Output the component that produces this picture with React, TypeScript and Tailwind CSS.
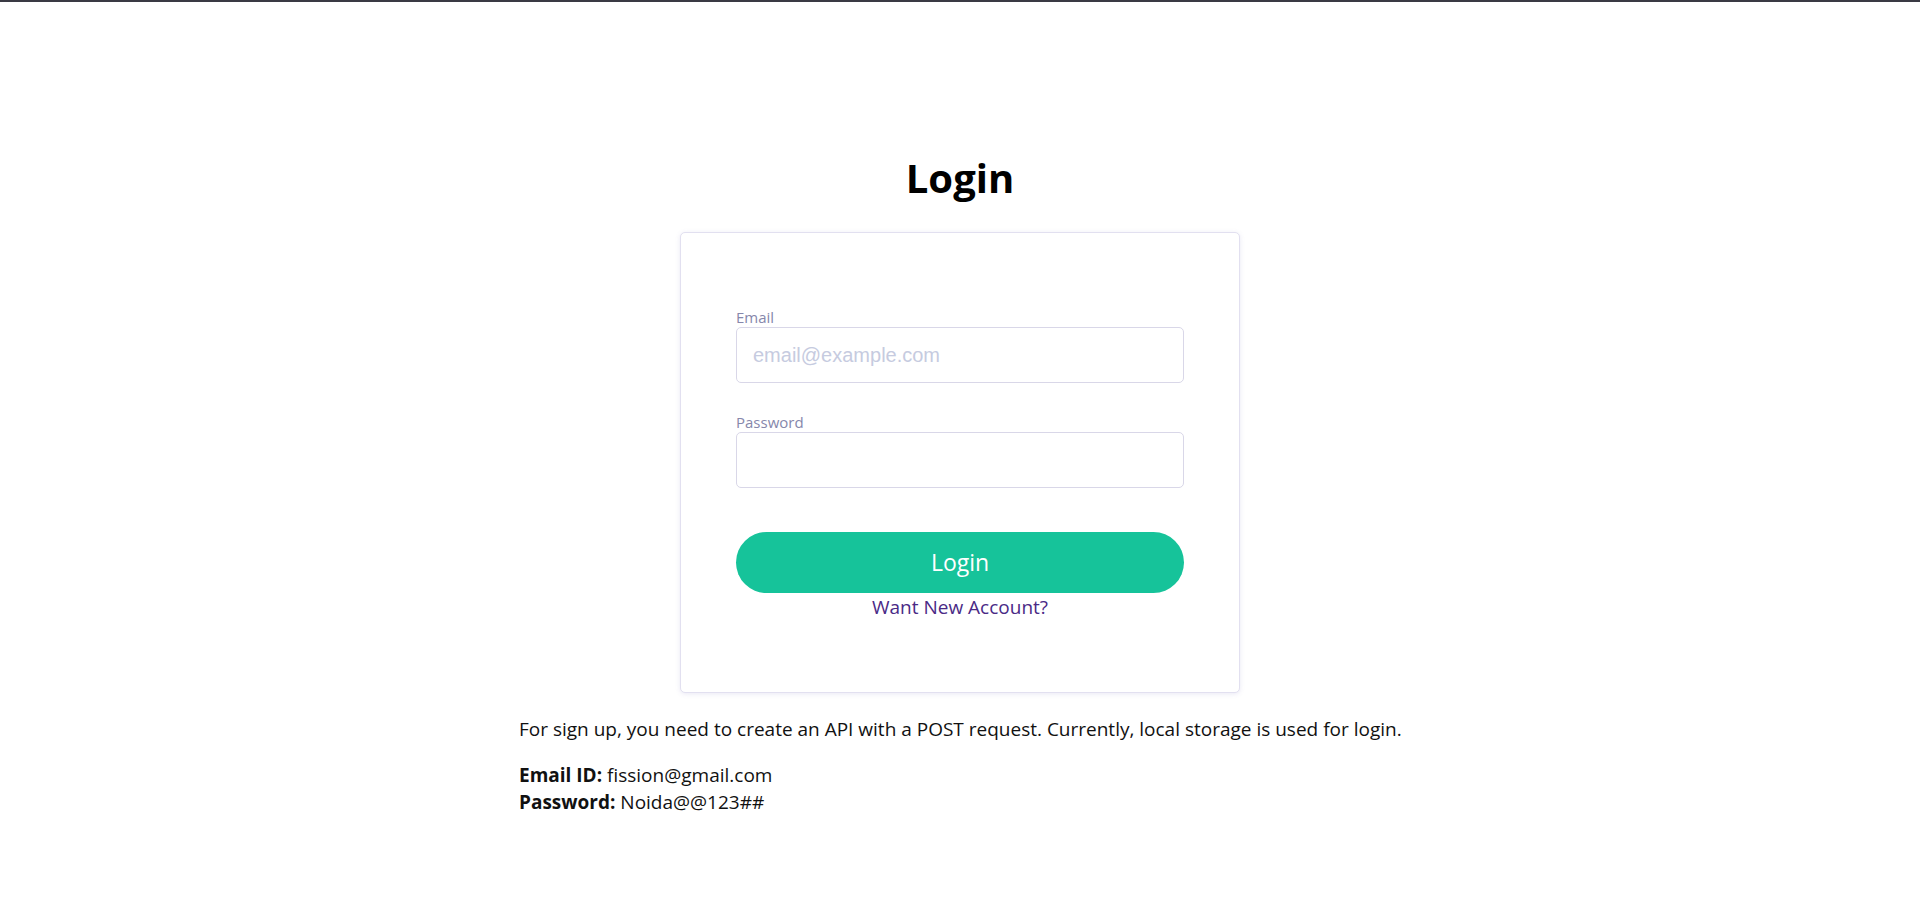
import React from "react";

export default function App() {
  return (
    <div
      className="min-h-screen bg-white border-t-2 border-[#3a3a44] text-black"
      style={{ fontFamily: '"Open Sans", "Noto Sans", sans-serif' }}
    >
      <div className="flex flex-col items-center pt-[152px]">
        <h1 className="text-[40px] leading-[48px] font-bold">Login</h1>
        <div className="mt-[30px] w-[560px] h-[461px] border border-[#e2e0f0] rounded-[5px] shadow-[0_1px_5px_rgba(110,100,180,0.15)] bg-white px-[55px] pt-[74px]">
          <label className="block text-[15px] leading-[20px] text-[#8687ab]">Email</label>
          <input
            type="email"
            placeholder="email@example.com"
            className="block w-full h-[56px] border border-[#d9d7e8] rounded-[5px] px-[16px] text-[20px] outline-none placeholder:text-[#c6cbe0]"
            style={{ fontFamily: '"Liberation Sans", Arial, sans-serif' }}
          />
          <label className="block mt-[29px] text-[15px] leading-[20px] text-[#8687ab]">Password</label>
          <input
            type="password"
            className="block w-full h-[56px] border border-[#d9d7e8] rounded-[5px] px-[16px] text-[20px] outline-none"
          />
          <button className="mt-[44px] block w-full h-[61px] rounded-full bg-[#16c39a] text-white text-[23px]">
            Login
          </button>
          <div className="text-center text-[19px] leading-[28px] text-[#4a2a86]">Want New Account?</div>
        </div>
        <div className="w-[882px] mt-[23px] text-[19px] leading-[27px] text-[#111]">
          <p className="mb-[19px] whitespace-nowrap">
            For sign up, you need to create an API with a POST request. Currently, local storage is used for login.
          </p>
          <p>
            <b>Email ID:</b> fission@gmail.com
          </p>
          <p>
            <b>Password:</b> Noida@@123##
          </p>
        </div>
      </div>
    </div>
  );
}
